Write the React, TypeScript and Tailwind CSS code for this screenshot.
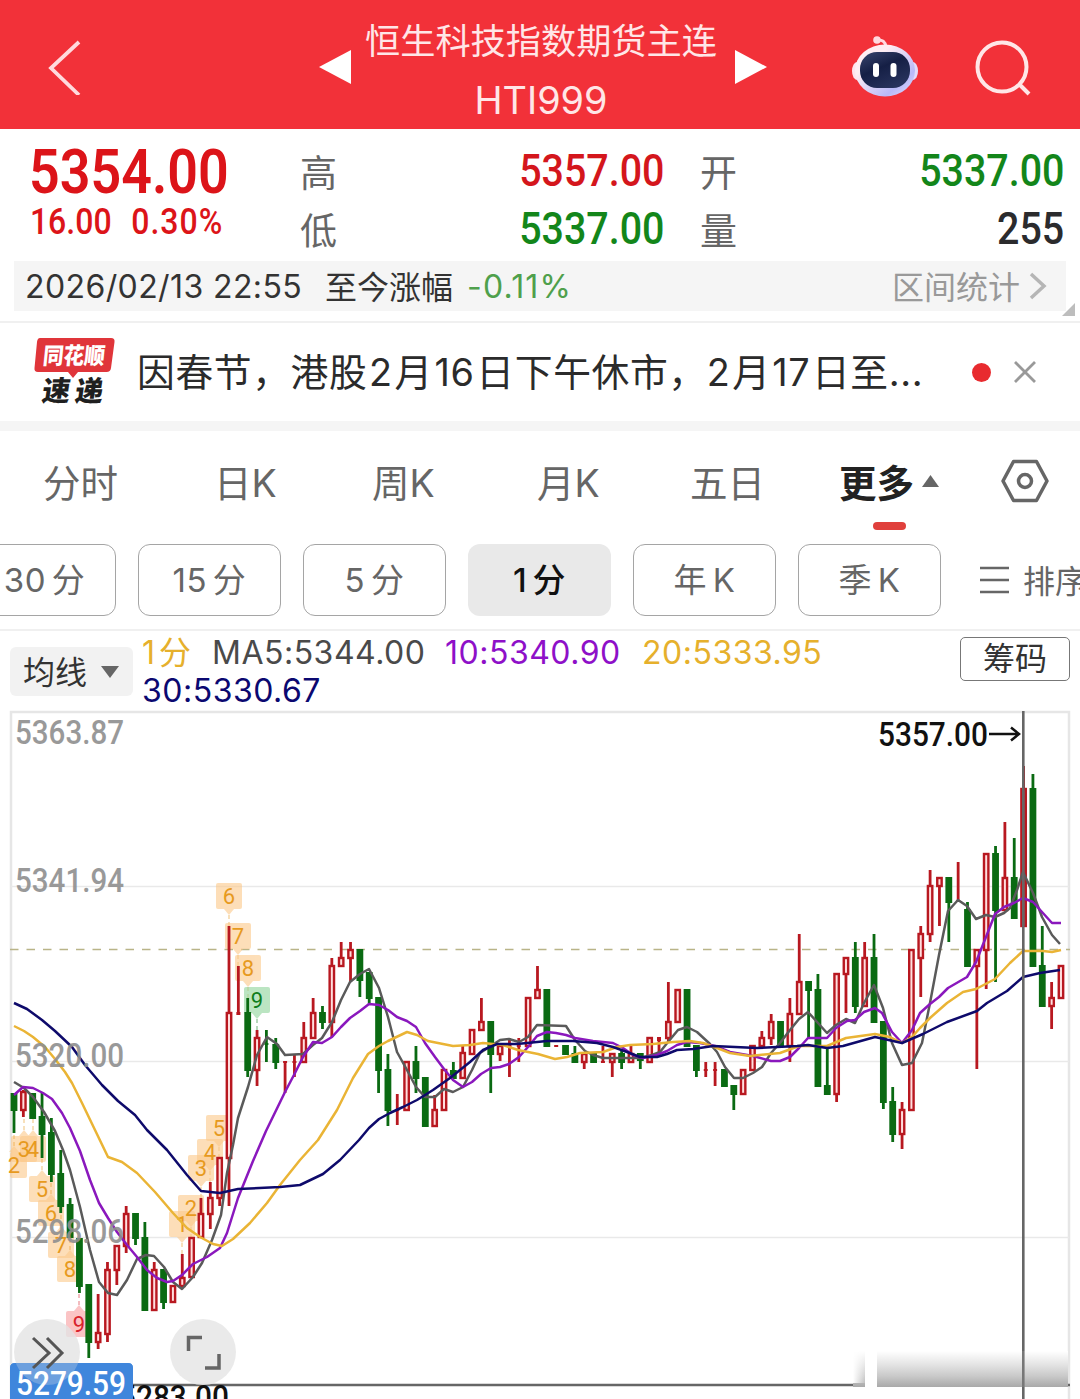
import { clsx } from "clsx";

type Candle = [up: 0 | 1, high: number, top: number, bottom: number, low: number];

// One entry per minute bar, in chart pixels: [up, high, body top, body bottom, low].
const CANDLES: Candle[] = [
  [0, 1093, 1093, 1111, 1133], [1, 1090, 1091, 1111, 1117], [0, 1093, 1093, 1119, 1119], [0, 1093, 1116, 1135, 1158],
  [0, 1118, 1132, 1175, 1182], [0, 1150, 1173, 1207, 1213], [0, 1198, 1204, 1238, 1238], [0, 1238, 1238, 1287, 1293],
  [0, 1284, 1284, 1343, 1358], [1, 1294, 1332, 1343, 1349], [1, 1262, 1269, 1335, 1342], [1, 1245, 1245, 1271, 1285],
  [1, 1206, 1213, 1247, 1253], [0, 1213, 1213, 1239, 1245], [0, 1222, 1237, 1311, 1311], [1, 1262, 1269, 1311, 1311],
  [0, 1269, 1269, 1303, 1309], [1, 1285, 1285, 1303, 1303], [1, 1254, 1277, 1287, 1287], [1, 1237, 1237, 1278, 1278],
  [1, 1198, 1213, 1238, 1238], [1, 1182, 1197, 1215, 1229], [1, 1157, 1157, 1199, 1206], [1, 926, 1012, 1159, 1206],
  [1, 966, 1012, 1015, 1015], [0, 998, 1012, 1071, 1077], [1, 1030, 1037, 1071, 1086], [0, 1030, 1043, 1045, 1062],
  [0, 1038, 1044, 1063, 1069], [1, 1061, 1061, 1063, 1093], [1, 1055, 1061, 1063, 1077], [1, 1022, 1037, 1063, 1063],
  [1, 998, 1012, 1039, 1039], [0, 1006, 1012, 1023, 1029], [1, 958, 965, 1023, 1037], [1, 942, 957, 967, 967],
  [1, 942, 949, 959, 981], [0, 949, 949, 981, 997], [0, 972, 972, 999, 1005], [0, 997, 997, 1071, 1093],
  [0, 1054, 1069, 1111, 1126], [1, 1094, 1109, 1111, 1125], [1, 1061, 1061, 1111, 1111], [0, 1046, 1061, 1079, 1093],
  [0, 1077, 1077, 1127, 1127], [1, 1095, 1109, 1127, 1127], [1, 1069, 1069, 1111, 1111], [0, 1062, 1070, 1079, 1079],
  [1, 1046, 1052, 1079, 1079], [1, 1029, 1029, 1055, 1055], [1, 998, 1021, 1031, 1031], [0, 1021, 1021, 1055, 1093],
  [1, 1045, 1045, 1055, 1061], [1, 1038, 1045, 1047, 1077], [1, 1038, 1045, 1047, 1062], [1, 997, 997, 1047, 1047],
  [1, 966, 989, 999, 999], [0, 989, 989, 1047, 1047], [1, 1045, 1045, 1047, 1047], [0, 1045, 1045, 1055, 1055],
  [0, 1046, 1053, 1063, 1063], [1, 1053, 1053, 1063, 1069], [0, 1053, 1053, 1063, 1063], [1, 1046, 1061, 1063, 1063],
  [1, 1053, 1053, 1063, 1077], [0, 1051, 1053, 1063, 1069], [1, 1046, 1053, 1063, 1063], [0, 1053, 1053, 1061, 1069],
  [1, 1037, 1037, 1063, 1063], [1, 1037, 1037, 1041, 1053], [1, 982, 1021, 1039, 1042], [1, 989, 989, 1023, 1023],
  [0, 989, 989, 1047, 1047], [0, 1045, 1045, 1071, 1077], [1, 1062, 1069, 1071, 1077], [1, 1062, 1069, 1071, 1086],
  [0, 1069, 1069, 1087, 1087], [0, 1085, 1085, 1095, 1110], [1, 1069, 1069, 1095, 1095], [1, 1045, 1045, 1071, 1071],
  [1, 1031, 1037, 1047, 1047], [1, 1014, 1021, 1039, 1045], [0, 1021, 1021, 1047, 1047], [1, 998, 1013, 1047, 1062],
  [1, 934, 981, 1015, 1015], [0, 981, 981, 991, 1038], [0, 974, 989, 1087, 1087], [0, 1048, 1085, 1095, 1095],
  [1, 973, 973, 1095, 1102], [1, 957, 957, 975, 1013], [0, 942, 957, 1007, 1013], [1, 942, 957, 1007, 1007],
  [0, 934, 957, 1023, 1023], [0, 1021, 1021, 1103, 1109], [0, 1087, 1101, 1135, 1142], [1, 1102, 1109, 1135, 1149],
  [1, 949, 949, 1111, 1111], [1, 926, 933, 959, 997], [1, 870, 885, 935, 942], [1, 877, 877, 887, 926],
  [0, 877, 877, 903, 942], [1, 862, 900, 902, 902], [0, 902, 909, 967, 967], [1, 949, 949, 967, 1069],
  [1, 853, 853, 951, 989], [0, 846, 853, 911, 982], [1, 822, 877, 911, 911], [0, 838, 877, 919, 919],
  [1, 766, 788, 927, 927], [0, 774, 788, 967, 967], [0, 926, 965, 1007, 1007], [1, 982, 997, 1007, 1029],
  [1, 965, 965, 999, 999],
];

const MA5 =
  "14,1082 24,1088 33,1097 44,1112 55,1131 63,1150 70,1170 80,1207 90,1250 99,1282 108,1293 117,1295 127,1280 137,1259 146,1255 154,1256 164,1267 173,1282 182,1289 193,1277 202,1263 212,1240 221,1215 227,1173 233,1145 238,1118 248,1087 257,1055 267,1037 277,1044 285,1055 303,1054 313,1045 322,1038 332,1022 341,1000 350,982 360,974 369,969 379,988 388,1017 397,1052 407,1070 416,1087 425,1097 435,1097 444,1089 453,1092 463,1087 472,1070 480,1053 491,1046 500,1040 509,1039 519,1042 528,1037 537,1025 566,1026 575,1040 585,1051 593,1055 603,1058 640,1058 652,1055 660,1052 668,1042 678,1030 687,1027 697,1032 710,1044 717,1052 725,1067 734,1078 743,1078 753,1073 762,1067 771,1053 780,1043 790,1030 799,1019 808,1012 818,1023 827,1033 836,1025 846,1019 855,1023 864,1003 874,985 883,1008 892,1043 902,1065 912,1063 922,1043 930,1003 939,955 948,911 958,900 967,906 976,919 986,915 995,917 1004,913 1010,908 1017,890 1023,872 1033,893 1042,917 1052,935 1060,944";
const MA10 =
  "14,1095 23,1087 33,1088 43,1093 52,1099 62,1113 70,1128 80,1151 90,1180 99,1203 108,1218 117,1232 127,1245 137,1257 147,1270 157,1278 167,1282 173,1281 182,1275 193,1264 207,1257 220,1248 227,1233 238,1198 253,1161 266,1131 285,1092 295,1073 303,1057 313,1042 322,1043 332,1037 341,1027 350,1018 360,1011 369,1004 379,1005 388,1010 397,1017 407,1021 416,1027 425,1043 435,1057 444,1069 453,1080 463,1087 472,1082 481,1074 491,1068 500,1067 509,1064 519,1057 528,1047 537,1036 547,1032 556,1033 566,1035 575,1038 593,1041 613,1043 623,1048 633,1055 643,1058 657,1055 667,1051 677,1045 687,1042 700,1043 715,1046 730,1052 753,1056 771,1061 780,1061 790,1057 799,1048 808,1038 827,1038 836,1028 847,1021 855,1020 864,1012 875,1008 882,1013 892,1032 902,1043 912,1030 920,1013 930,1004 939,997 948,988 967,977 976,962 986,937 995,914 1004,907 1014,903 1023,898 1033,902 1042,912 1052,923 1061,923";
const MA20 =
  "14,1026 24,1031 33,1037 45,1047 55,1059 65,1072 72,1083 82,1103 95,1130 108,1157 122,1162 137,1173 155,1192 173,1213 187,1228 200,1237 213,1244 222,1246 233,1239 250,1223 267,1203 280,1185 300,1160 318,1140 337,1110 353,1078 368,1054 379,1046 388,1041 407,1032 417,1035 428,1041 453,1046 470,1045 483,1043 503,1045 518,1050 538,1054 555,1059 567,1057 580,1053 603,1052 617,1047 630,1045 653,1044 673,1042 690,1041 703,1043 717,1048 730,1053 750,1056 780,1053 799,1046 827,1046 846,1038 875,1034 890,1037 902,1043 912,1037 920,1028 930,1018 947,1003 963,992 976,989 995,979 1010,963 1023,951 1043,951 1052,952 1061,950";
const MA30 =
  "14,1003 27,1009 42,1020 55,1031 72,1047 85,1065 102,1085 118,1101 135,1115 147,1130 167,1150 187,1175 201,1191 220,1193 238,1189 280,1187 300,1185 323,1174 340,1160 359,1140 369,1128 379,1119 390,1113 403,1107 417,1100 433,1090 450,1078 470,1062 483,1050 497,1044 517,1044 547,1041 573,1041 597,1043 613,1047 627,1052 640,1057 657,1057 667,1054 677,1050 693,1049 713,1046 757,1048 797,1046 808,1045 827,1048 843,1046 875,1037 902,1043 923,1034 947,1022 977,1011 987,1003 1007,991 1023,977 1040,973 1060,970";

// Nine-turn markers: [digit, text centre x, text centre y, points down].
const MARKERS: [string, number, number, boolean][] = [
  ["6", 229, 896, true], ["7", 238, 936, true], ["8", 248, 968, true], ["9", 257, 1000, true],
  ["5", 219, 1128, true], ["4", 210, 1152, true], ["3", 201, 1168, true], ["2", 191, 1208, true],
  ["1", 182, 1224, true], ["3", 24, 1149, false], ["4", 33, 1149, false], ["2", 14, 1165, false],
  ["5", 42, 1189, false], ["6", 51, 1213, false], ["7", 61, 1245, false], ["8", 70, 1269, false],
  ["9", 79, 1324, false],
];

const AXIS: [string, number][] = [
  ["5363.87", 743.5], ["5341.94", 891.5], ["5320.00", 1067], ["5298.06", 1242.5],
];

const TABS = [
  { label: "分时", className: "w-[171px]" },
  { label: "日K", className: "w-[158px]" },
  { label: "周K", className: "w-[165px]" },
  { label: "月K", className: "w-[153px]" },
  { label: "五日", className: "w-[149px]" },
];

const PERIODS = ["30 分", "15 分", "5 分", "1 分", "年 K", "季 K"];

function RobotIcon() {
  return (
    <svg width="68" height="64" viewBox="0 0 68 64">
      <defs>
        <linearGradient id="head" x1="0" y1="0" x2="1" y2="1">
          <stop offset="0.3" stopColor="#ffeef3" />
          <stop offset="0.75" stopColor="#b9b9f8" />
          <stop offset="1" stopColor="#e5defd" />
        </linearGradient>
        <linearGradient id="visor" x1="0" y1="0" x2="0.6" y2="1">
          <stop offset="0" stopColor="#3a456e" />
          <stop offset="0.5" stopColor="#151f45" />
          <stop offset="1" stopColor="#27325c" />
        </linearGradient>
      </defs>
      <path d="M26 7 Q34 6 35 14" fill="none" stroke="#ffd9df" strokeWidth="3" />
      <circle cx="26" cy="7" r="3.8" fill="#ffd9df" />
      <ellipse cx="6" cy="38" rx="5" ry="9" fill="#fde4ee" />
      <ellipse cx="62" cy="38" rx="5" ry="9" fill="#e3dcfb" />
      <ellipse cx="34" cy="37.500" rx="30" ry="26" fill="url(#head)" />
      <rect x="9" y="19" width="50" height="36" rx="17" fill="url(#visor)" />
      <rect x="22" y="30" width="6" height="14" rx="3" fill="#fff" />
      <rect x="39.500" y="30" width="6" height="14" rx="3" fill="#fff" />
    </svg>
  );
}

function Header() {
  return (
    <header className="flex h-[129px] items-center bg-[#f23139] text-[#ffe6e7]">
      <svg className="ml-[46px]" width="36" height="60" viewBox="0 0 36 60" fill="none" stroke="#ffdadd" strokeWidth="3.800">
        <path d="M33 7 L5 33 L33 60" />
      </svg>
      <svg className="mt-1 ml-[237px]" width="32" height="36" viewBox="0 0 32 36">
        <path d="M32 1 V35 L0 18 Z" fill="#fff" />
      </svg>
      <div className="ml-[14px] flex w-[352px] flex-col items-center pt-[14px] whitespace-nowrap">
        <h1 className="h-[56px] text-[35.200px] leading-[54px]">恒生科技指数期货主连</h1>
        <p className="h-[60px] text-[37.800px] leading-[61px]">HTI999</p>
      </div>
      <svg className="mt-1 ml-[18px]" width="32" height="36" viewBox="0 0 32 36">
        <path d="M0 1 V35 L32 18 Z" fill="#fff" />
      </svg>
      <div className="ml-[84px]">
        <RobotIcon />
      </div>
      <svg className="mt-2 ml-[56px]" width="60" height="60" viewBox="0 0 60 60" fill="none" stroke="#ffe6e7" strokeWidth="4">
        <circle cx="27" cy="28" r="24.500" />
        <path d="M44 45 L54 55" />
      </svg>
    </header>
  );
}

function Stat({ label, value, className }: { label: string; value: string; className: string }) {
  return (
    <div className="flex h-[58px] items-center justify-between">
      <span className="pt-[6px] text-[37px] leading-[58px] text-[#666]">{label}</span>
      <span className={clsx("origin-right scale-x-[0.905] pt-[2px] font-[Roboto] text-[43.500px] leading-[58px] font-medium", className)}>
        {value}
      </span>
    </div>
  );
}

function Quote() {
  return (
    <section className="flex h-[132px] pt-[13px] pl-[29px]">
      <div className="w-[271px] text-[#dc1419]">
        <p className="origin-left scale-x-[0.89] font-[Roboto] text-[60.500px] leading-[62px] font-semibold">5354.00</p>
        <p className="flex origin-left scale-x-[0.89] gap-[22px] pl-px font-[Roboto] text-[36px] leading-[36px] font-medium whitespace-nowrap">
          <span>16.00</span>
          <span className="tracking-[1.100px]">0.30%</span>
        </p>
      </div>
      <div className="w-[364px]">
        <Stat label="高" value="5357.00" className="text-[#d4161c]" />
        <Stat label="低" value="5337.00" className="text-[#13861a]" />
      </div>
      <div className="ml-[36px] w-[364px]">
        <Stat label="开" value="5337.00" className="text-[#13861a]" />
        <Stat label="量" value="255" className="text-[#2b2b2d]" />
      </div>
    </section>
  );
}

function RangeStrip() {
  return (
    <section className="flex h-[62px] border-b-2 border-[#f0f0f0] pl-[14px]">
      <div className="flex h-[50px] w-[1052px] items-center bg-[#f5f5f5] pl-[11px] text-[32px] leading-[50px] whitespace-nowrap text-[#333]">
        <span className="w-[300px] pt-[2px] tracking-[0.4px]">2026/02/13 22:55</span>
        <span className="w-[142px] pt-[3px]">至今涨幅</span>
        <span className="pt-[2px] tracking-[1.200px] text-[#4fa04c]">-0.11%</span>
        <span className="ml-auto pt-[3px] text-[#999]">区间统计</span>
        <svg className="mr-[18px] ml-[8px]" width="20" height="30" viewBox="0 0 20 30" fill="none" stroke="#b5b5b5" strokeWidth="3.500">
          <path d="M3 3 L16 15 L3 27" />
        </svg>
      </div>
      <svg className="mt-[42px] -ml-1" width="13" height="13" viewBox="0 0 13 13">
        <path d="M13 0 V13 H0 Z" fill="#bdbdbd" />
      </svg>
    </section>
  );
}

function Notice() {
  return (
    <section className="flex h-[108px] items-center border-b-[10px] border-[#f5f5f5] pl-[33px]">
      <svg className="overflow-visible" width="84" height="70" viewBox="0 0 84 70">
        <path d="M7 1 H78 Q82 1 81.500 5 L78 31 Q77.500 35 73.500 35 H45 L40 41 L35 35 H5 Q1 35 1.500 31 L4 5 Q4.500 1 7 1 Z" fill="#e0353a" />
        <g fontFamily="Noto Sans CJK SC, sans-serif" fontWeight="900">
          <text x="12" y="27" fontSize="23" fill="#fff" textLength="62" lengthAdjust="spacingAndGlyphs" transform="skewX(-6)">同花顺</text>
          <text x="17" y="64" fontSize="28" fill="#1f1f1f" textLength="61" transform="skewX(-8)">速递</text>
        </g>
      </svg>
      <p className="ml-[20px] w-[834px] text-[37.800px] leading-[54px] tracking-[0.600px] whitespace-nowrap text-[#2b2b2b] [word-spacing:-9.500px]">
        因春节，港股 2 月 16 日下午休市，2 月 17 日至...
      </p>
      <span className="ml-px size-[19px] rounded-full bg-[#e82b2f]" />
      <svg className="ml-[22px]" width="24" height="24" viewBox="0 0 24 24" stroke="#999" strokeWidth="2.800">
        <path d="M2 2 L22 22 M22 2 L2 22" />
      </svg>
    </section>
  );
}

function Tabs() {
  return (
    <nav className="flex h-[113px] pl-[43px] text-[37.500px] leading-[105px] whitespace-nowrap text-[#666]">
      {TABS.map((tab) => (
        <span key={tab.label} className={tab.className}>
          {tab.label}
        </span>
      ))}
      <div className="flex w-[100px] flex-col">
        <div className="flex h-[91px] gap-2 font-bold text-[#222]">
          更多
          <svg className="mt-[44px]" width="17" height="12" viewBox="0 0 17 12">
            <path d="M8.500 0 L17 12 H0 Z" fill="#666" />
          </svg>
        </div>
        <span className="ml-[34px] h-[8px] w-[33px] rounded-full bg-[#e0403c]" />
      </div>
      <svg className="mt-[28px] ml-[62px]" width="48" height="44" viewBox="0 0 48 44" fill="none" stroke="#666" strokeWidth="3.500">
        <path d="M12.500 2.500 H35.500 L46 22 L35.500 41.500 H12.500 L2 22 Z" strokeLinejoin="round" />
        <circle cx="24" cy="22" r="6.500" />
      </svg>
    </nav>
  );
}

function Periods() {
  return (
    <div className="flex h-[87px] gap-[22px] overflow-hidden border-b-2 border-[#f0f0f0] text-[33px] whitespace-nowrap text-[#666]">
      {PERIODS.map((period, i) => (
        <span
          key={period}
          className={clsx(
            "h-[72px] w-[143px] shrink-0 rounded-[12px] text-center",
            i === 0 && "-ml-[27px]",
            period === "1 分" ? "bg-[#e9e9e9] leading-[73px] font-medium text-[#111]" : "border-[1.500px] border-[#a5a5a5] leading-[71px]",
          )}
        >
          <span className="tracking-[0.5px] [word-spacing:-4px]">{period}</span>
        </span>
      ))}
      <div className="ml-[17px] flex h-[72px] shrink-0 items-center gap-[14px] text-[32px]">
        <svg width="29" height="28" viewBox="0 0 29 28" stroke="#666" strokeWidth="2.500">
          <path d="M0 2 H29 M0 14 H29 M0 26 H29" />
        </svg>
        <span className="pt-[3px]">排序</span>
      </div>
    </div>
  );
}

function Averages() {
  return (
    <div className="flex h-[79px] pl-[10px] text-[32px] whitespace-nowrap">
      <div className="mt-[16px] flex h-[49px] w-[123px] items-center gap-[14px] rounded-md bg-[#f2f2f2] pl-[13px] text-[#333]">
        <span className="pt-[2px]">均线</span>
        <svg width="18" height="12" viewBox="0 0 18 12">
          <path d="M0 0 H18 L9 12 Z" fill="#666" />
        </svg>
      </div>
      <div className="ml-[9px] w-[818px] leading-[38px]">
        <p className="flex h-[38px] pt-[3px] tracking-[0.5px]">
          <span className="w-[70px] text-[#e6b02c] [word-spacing:-6px]">1 分</span>
          <span className="w-[233px] text-[#4a4a4a]">MA5:5344.00</span>
          <span className="w-[197px] text-[#8e10c8]">10:5340.90</span>
          <span className="text-[#e6b02c]">20:5333.95</span>
        </p>
        <p className="h-[38px] pt-[3px] tracking-[0.5px] text-[#0b0870]">30:5330.67</p>
      </div>
      <span className="mt-[6px] h-[44px] w-[110px] rounded-[5px] border-[1.500px] border-[#777] text-center text-[32px] leading-[42px] text-[#333]">
        筹码
      </span>
    </div>
  );
}

function markerColors(digit: string, down: boolean) {
  if (digit !== "9") return { fill: "#fcc98a", text: "#e79a1e" };
  return down ? { fill: "#8fd49a", text: "#0f7d1c" } : { fill: "#f99da0", text: "#d8222c" };
}

// Boxes go first and digits on top, so neighbouring flags never hide a number.
function Markers() {
  return (
    <>
      {MARKERS.map(([digit, x, y, down]) => {
        const { fill, text } = markerColors(digit, down);
        const left = Math.max(x - 13, 10);
        const dir = down ? 1 : -1;
        return (
          <g key={`${x}-${y}`}>
            <g fill={fill} opacity="0.6">
              <rect x={left} y={y - 13} width={x + 13 - left} height="26" rx="2" />
              <path d={`M${x - 5} ${y + 13 * dir} L${x} ${y + 19 * dir} L${x + 5} ${y + 13 * dir} Z`} />
            </g>
            <path d={`M${x} ${y + 19 * dir} v${14 * dir}`} stroke={text} strokeWidth="1" strokeDasharray="4 3" opacity="0.6" />
          </g>
        );
      })}
      {MARKERS.map(([digit, x, y, down]) => (
        <text key={`${x}-${y}`} x={x} y={y + 8} fontSize="22" textAnchor="middle" fill={markerColors(digit, down).text}>
          {digit}
        </text>
      ))}
    </>
  );
}

function Chart() {
  return (
    <svg className="block" width="1080" height="689" viewBox="0 710 1080 689" fontFamily="Roboto, sans-serif">
      <defs>
        <linearGradient id="fade" x1="0" y1="0" x2="0" y2="1">
          <stop offset="0" stopColor="#fff" />
          <stop offset="0.35" stopColor="#e6e6e6" />
          <stop offset="0.7" stopColor="#c9c9c9" />
          <stop offset="1" stopColor="#a9a9a9" />
        </linearGradient>
        <linearGradient id="fadeEdge" x1="0" y1="0" x2="1" y2="0">
          <stop offset="0" stopColor="#fff" />
          <stop offset="1" stopColor="#fff" stopOpacity="0" />
        </linearGradient>
      </defs>

      <path d="M11 1399 V712 H1069 V1399" fill="none" stroke="#e6e6e6" strokeWidth="2.500" />
      <path d="M11 886.500 H1069 M11 1061.500 H1069 M11 1237.500 H1069" stroke="#e9e9e9" strokeWidth="1.500" />
      <path d="M10 949.500 H1070" stroke="#b9b488" strokeWidth="1.500" strokeDasharray="8.500 8" />

      <Markers />

      {CANDLES.map(([up, high, top, bottom, low], i) => {
        const x = 14 + i * 9.348;
        const color = up ? "#b81820" : "#0a6a12";
        return (
          <g key={i} fill={color}>
            <rect x={x - 1.4} y={high} width="2.800" height={top - high} />
            <rect x={x - 1.4} y={bottom} width="2.800" height={low - bottom} />
            {up && bottom - top > 4 ? (
              <rect x={x - 2.2} y={top + 1} width="4.400" height={bottom - top - 2} fill={i === 108 ? "#a34a4a" : "#ffdede"} stroke={color} strokeWidth="2.400" />
            ) : (
              <rect x={bottom - top > 4 ? x - 3.4 : x - 2} y={top} width={bottom - top > 4 ? 6.8 : 4} height={bottom - top} />
            )}
          </g>
        );
      })}

      <g fill="none" strokeWidth="2.500" strokeLinejoin="round">
        <polyline points={MA5} stroke="#5a5a5a" />
        <polyline points={MA10} stroke="#8a18bd" />
        <polyline points={MA20} stroke="#eab435" />
        <polyline points={MA30} stroke="#0e0a6b" />
      </g>

      <path d="M1023.300 711 V1399" stroke="#666" strokeWidth="2.600" />
      <path d="M133 1385 H1070" stroke="#666" strokeWidth="2.500" />
      <rect x="853" y="1351" width="215" height="36" fill="url(#fade)" />
      <rect x="853" y="1351" width="14" height="32" fill="url(#fadeEdge)" />
      <rect x="865" y="1351" width="12" height="37" fill="#fff" />
      <path d="M1023.300 1351 V1387" stroke="#777" strokeWidth="2.600" />

      <g fontSize="32.500" fontWeight="500">
        {AXIS.map(([label, y]) => (
          <text key={label} x="15" y={y} textLength="109" lengthAdjust="spacingAndGlyphs" fill="#8f8f8f" opacity="0.9">
            {label}
          </text>
        ))}
        <text x="878" y="746" textLength="110" lengthAdjust="spacingAndGlyphs" fill="#111">5357.00</text>
        <path d="M989 734 H1019 M1011 727.500 L1019 734 L1011 740.500" fill="none" stroke="#111" strokeWidth="2.500" />
        <text x="119" y="1409" textLength="110" lengthAdjust="spacingAndGlyphs" fill="#111">5283.00</text>
        <path d="M10 1399 V1368 Q10 1363 15 1363 H128 Q133 1363 133 1368 V1399 Z" fill="#3f86dc" />
      </g>

      <circle cx="47" cy="1352" r="33" fill="#e3e3e3" opacity="0.8" />
      <path d="M10 1399 V1368 Q10 1363 15 1363 H128 Q133 1363 133 1368 V1399 Z" fill="#3f86dc" opacity="0.65" />
      <path d="M33 1338 L49 1353 L33 1368 M47 1338 L62 1353 L47 1368" fill="none" stroke="#555" strokeWidth="3" />
      <text x="16" y="1395" fontSize="32.500" fontWeight="500" textLength="110" lengthAdjust="spacingAndGlyphs" fill="#fff">5279.59</text>
      <circle cx="203" cy="1352" r="33" fill="#e8e8e8" opacity="0.9" />
      <path d="M188.500 1351 V1337.500 H202 M219 1354 V1368 H205" fill="none" stroke="#666" strokeWidth="3.500" />
    </svg>
  );
}

export default function App() {
  return (
    <main className="h-[1399px] w-[1080px] overflow-hidden bg-white font-['Inter','Noto_Sans_CJK_SC',sans-serif]">
      <Header />
      <Quote />
      <RangeStrip />
      <Notice />
      <Tabs />
      <Periods />
      <Averages />
      <Chart />
    </main>
  );
}
